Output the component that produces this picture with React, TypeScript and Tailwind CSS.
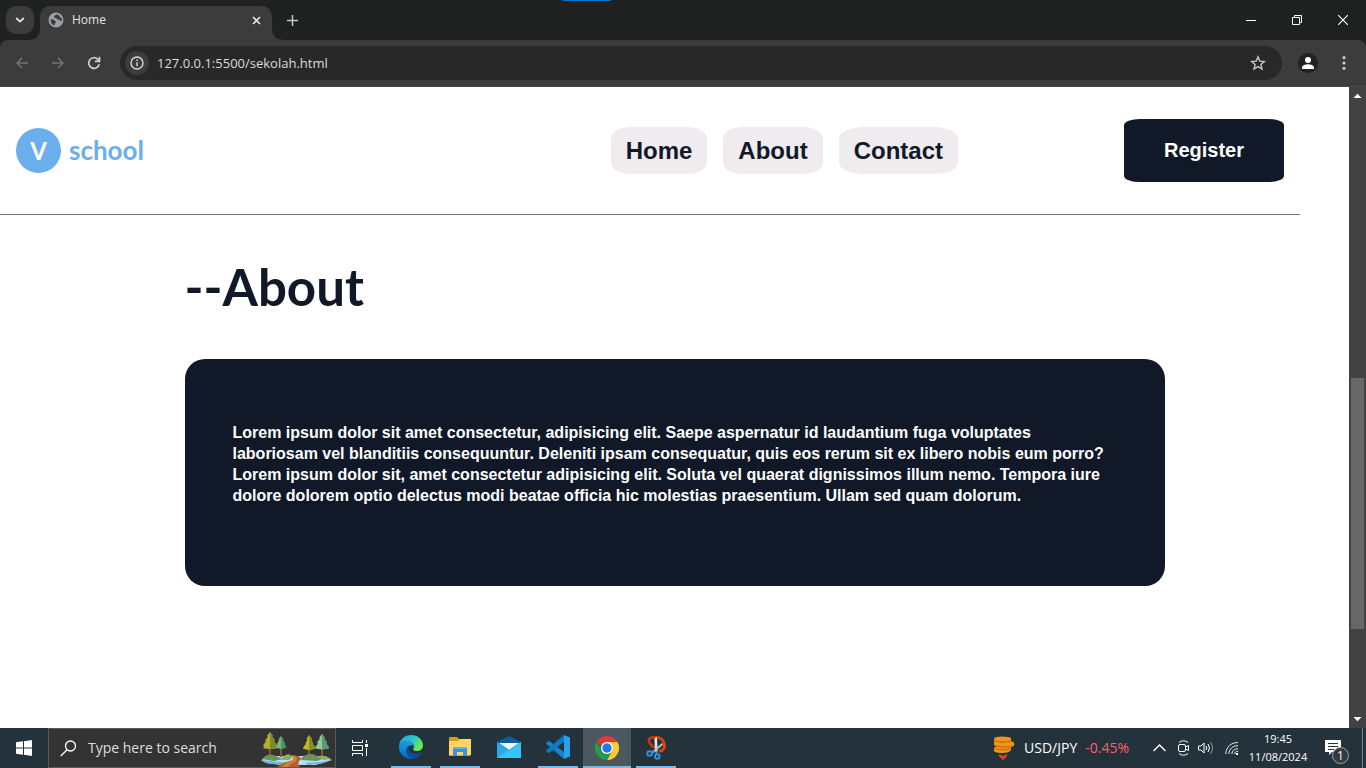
import React from 'react';

function WindowBar() {
  return (
    <div className="relative flex h-10 items-stretch bg-[#202221] font-['Open_Sans','Noto_Sans',sans-serif]">
      <span className="absolute left-[563px] top-0 h-px w-12 bg-[#0078d7]" />
      <button aria-label="Search tabs" className="mt-1.5 ml-1.5 flex h-7 w-7 items-center justify-center rounded-[10px] bg-[#3c3c3c]">
        <svg width="10" height="6" viewBox="0 0 10 6" fill="none" stroke="#e3e3e3" strokeWidth="1.8"><path d="M1.2 1l3.8 3.6L8.8 1" /></svg>
      </button>
      <div className="relative mt-1.5 ml-1.5 flex w-[232px] items-center rounded-t-[10px] bg-[#3c3c3c] pr-2.5 pb-1.5 pl-2">
        <svg className="absolute bottom-0 -left-2.5" width="10" height="10"><path d="M10 0v10H0A10 10 0 0010 0z" fill="#3c3c3c" /></svg>
        <svg className="absolute -right-2.5 bottom-0" width="10" height="10"><path d="M0 0v10h10A10 10 0 010 0z" fill="#3c3c3c" /></svg>
        <svg width="16" height="16" viewBox="0 0 16 16">
          <circle cx="8" cy="8" r="7" fill="#9aa0a6" />
          <path d="M8.7 2.2L6.2 4v2h2.2l.8 1.5h1.6l1 1.3 2.1.3v-3l-2.1-.9V3.7z M2.2 7.6h3.6l2 2.1v1.6H6.7v2.4L3.6 12z" fill="#3c3c3c" />
          <circle cx="8" cy="8" r="6.7" fill="none" stroke="#9aa0a6" strokeWidth="1.5" />
        </svg>
        <span className="ml-2 flex-1 text-xs text-[#e3e3e3]">Home</span>
        <button aria-label="Close tab" className="flex h-4 w-3 items-center justify-center">
          <svg width="9" height="9" viewBox="0 0 9 9" stroke="#e3e3e3" strokeWidth="1.6"><path d="M1 1l7 7M8 1L1 8" /></svg>
        </button>
      </div>
      <button aria-label="New tab" className="ml-[15px] flex w-3 items-center">
        <svg width="11" height="11" viewBox="0 0 11 11" stroke="#c7c7c7" strokeWidth="1.5"><path d="M5.5 0v11M0 5.5h11" /></svg>
      </button>
      <div className="ml-auto flex">
        <button aria-label="Minimize" className="flex w-[46px] items-center justify-center">
          <svg width="10" height="10" stroke="#fff"><path d="M0 5.500h10" /></svg>
        </button>
        <button aria-label="Restore" className="flex w-[46px] items-center justify-center">
          <svg width="10" height="10" fill="none" stroke="#fff"><path d="M.5 2.500h7v7h-7zM2.500 2.500v-2h7v7h-2" /></svg>
        </button>
        <button aria-label="Close" className="flex w-[46px] items-center justify-center">
          <svg width="10" height="10" stroke="#fff" strokeWidth="1.1"><path d="M0 0l10 10M10 0L0 10" /></svg>
        </button>
      </div>
    </div>
  );
}

function Toolbar() {
  return (
    <div className="bg-[#202221] font-['Open_Sans','Noto_Sans',sans-serif]">
      <div className="flex h-[47px] items-center rounded-t-lg border-b border-[#474747] bg-[#3c3c3c] pr-3.5 pl-3.5">
        <button aria-label="Back" className="flex w-4 justify-center">
          <svg width="12" height="12" viewBox="0 0 13 12" fill="none" stroke="#777" strokeWidth="1.5"><path d="M13 6H1.500M6.500 .7L1.200 6l5.300 5.300" /></svg>
        </button>
        <button aria-label="Forward" className="ml-5 flex w-4 justify-center">
          <svg width="12" height="12" viewBox="0 0 13 12" fill="none" stroke="#777" strokeWidth="1.5"><path d="M0 6h11.500M6.500 .7L11.800 6l-5.300 5.300" /></svg>
        </button>
        <button aria-label="Reload" className="ml-5 flex w-4 justify-center">
          <svg width="14" height="14" viewBox="0 0 14 14" fill="none" stroke="#d0d0d0" strokeWidth="1.7"><path d="M12.200 8.200A5.300 5.300 0 1 1 10.800 3.300L12 4.500M12.500 .8v4.500H8" /></svg>
        </button>
        <div className="ml-[18px] flex h-[34px] flex-1 items-center rounded-full bg-[#282828] pr-4 pl-[5px]">
          <button aria-label="View site information" className="flex h-6 w-6 items-center justify-center rounded-full bg-[#3c3c3c]">
            <svg width="14" height="14" viewBox="0 0 14 14" fill="none" stroke="#d8d8d8" strokeWidth="1.4"><circle cx="7" cy="7" r="6" /><path d="M7 6.200v4M7 3.600v1.500" /></svg>
          </button>
          <input aria-label="Address" defaultValue="127.0.0.1:5500/sekolah.html" className="ml-2 h-6 flex-1 bg-transparent text-[13px] text-[#dcdcdc] outline-none" />
          <button aria-label="Bookmark this page">
            <svg width="16" height="16" viewBox="0 0 16 16" fill="none" stroke="#c7c7c7" strokeWidth="1.4"><path d="M8 1.800l1.800 4.300 4.600.4-3.500 3 1.100 4.500L8 11.600 4 14l1.100-4.500-3.500-3 4.600-.4z" /></svg>
          </button>
        </div>
        <button aria-label="Profile" className="ml-4 flex h-5 w-5 items-center justify-center rounded-full bg-[#202221]">
          <svg width="14" height="14" viewBox="0 0 14 14" fill="#fff"><circle cx="7" cy="4" r="3" /><path d="M1 13v-1.500C1 9.500 4.500 8.300 7 8.300s6 1.200 6 3.200V13z" /></svg>
        </button>
        <button aria-label="Menu" className="ml-[18px] flex w-4 justify-center">
          <svg width="4" height="14" viewBox="0 0 4 14" fill="#c7c7c7"><circle cx="2" cy="1.700" r="1.600" /><circle cx="2" cy="7" r="1.600" /><circle cx="2" cy="12.300" r="1.600" /></svg>
        </button>
      </div>
    </div>
  );
}

function Site() {
  const navLink = 'rounded-[20%/25%] bg-[#efebee] px-[15px] py-[7px] text-2xl leading-[33px] font-bold';
  return (
    <div className="min-w-0 flex-1 bg-white font-['Liberation_Sans',sans-serif] text-[#111827]">
      <header className="mr-[49px] flex h-32 items-center border-b border-[#6b7880] px-4">
        <a href="#home" className="flex items-center gap-2 font-['Lato',sans-serif] font-bold text-[#6baeec]">
          <span className="flex h-[45px] w-[45px] items-center justify-center rounded-full bg-[#6baeec] text-2xl text-white">V</span>
          <span className="pb-0.5 text-[26px] leading-8">school</span>
        </a>
        <nav className="ml-auto flex gap-4">
          <a href="#home" className={navLink}>Home</a>
          <a href="#about" className={navLink}>About</a>
          <a href="#contact" className={navLink}>Contact</a>
        </nav>
        <button className="ml-[166px] h-[63px] w-40 rounded-[10%] bg-[#111827] pb-0.5 text-xl font-bold text-white">Register</button>
      </header>
      <main className="mx-auto max-w-[980px] pt-11">
        <h1 className="font-['Lato',sans-serif] text-[51px] leading-[56px] font-bold">--About</h1>
        <section className="mt-11 rounded-[20px] bg-[#111827] px-12 pt-[63px] pb-20">
          <p className="text-base leading-[21px] font-bold text-white">
            Lorem ipsum dolor sit amet consectetur, adipisicing elit. Saepe aspernatur id laudantium fuga voluptates laboriosam vel blanditiis consequuntur. Deleniti ipsam consequatur, quis eos rerum sit ex libero nobis eum porro? Lorem ipsum dolor sit, amet consectetur adipisicing elit. Soluta vel quaerat dignissimos illum nemo. Tempora iure dolore dolorem optio delectus modi beatae officia hic molestias praesentium. Ullam sed quam dolorum.
          </p>
        </section>
      </main>
    </div>
  );
}

function Scrollbar() {
  return (
    <div className="flex w-[17px] flex-col items-center bg-[#424242]">
      <svg className="my-1.5 shrink-0" width="9" height="5" fill="#fff"><path d="M0.500 5L4.500 .8 8.500 5z" /></svg>
      <div className="grow-[274]" />
      <div className="w-[13px] grow-[251] bg-[#686868]" />
      <div className="grow-[82]" />
      <svg className="my-1.5 shrink-0" width="9" height="5" fill="#fff"><path d="M.5 0l4 4.200 4-4.200z" /></svg>
    </div>
  );
}

function Forest() {
  return (
    <svg width="72" height="36" viewBox="0 0 72 36">
      <path d="M0 28l10-4h50l11 4-9 3-8 2H20L5 31z" fill="#b9def5" />
      <path d="M0 28l18 2 10 1-8 2-15-2z M71 28l-13 2-14 1 3 2 15-2z" fill="#6fb3de" />
      <path d="M8 15h2v12H8z M19 16h2v9h-2z M47 15h2v10h-2z M60 15h2v11h-2z" fill="#8a5138" />
      <path d="M9 0l3 4-1 .5 3 4-1 .8 3 4-1 1 1 2-7 1-7-1 1-2-1-1 3-4-1-.8 3-4-1-.5z" fill="#b5ae2a" />
      <path d="M9 0l3 4-1 .5 3 4-1 .8 3 4-1 1 1 2-7 1z" fill="#7f8b2a" />
      <path d="M48 3l3 4-1 .5 2 3.500-.5.8 3 4-1 1.200-5.500 1-5.500-1-.5-1.200 3-4-.5-.8 2-3.500-1-.5z" fill="#c4b824" />
      <path d="M48 3l3 4-1 .5 2 3.500-.5.8 3 4-1 1.200-5.500 1z" fill="#85902a" />
      <path d="M20 4l2.500 3.500-.8.500 2.300 3.500-.7.500 2.200 3.500-5.500 1.500-5.500-1.500 2.200-3.500-.7-.5 2.300-3.500-.8-.5z" fill="#77b785" />
      <path d="M20 4l2.500 3.500-.8.500 2.300 3.500-.7.500 2.200 3.500-5.500 1.500z" fill="#4a9464" />
      <path d="M61 2l3 4-.8.600 3 4-1 .8 2.800 4-.5 1.200-6.500 1-6.500-1-.5-1.200 3-4-1-.8 3-4-1-.6z" fill="#8ecb97" />
      <path d="M61 2l3 4-.8.600 3 4-1 .8 2.800 4-.5 1.200-6.500 1z" fill="#559c70" />
      <path d="M1 27q7-8 16-2l5 2-9 2z M39 27q9-8 17-3l8 2-8 3-15-1z" fill="#679554" />
      <path d="M21 26q6-7 11-1l-4 3h-7z M56 25q7-4 14 2l-7 1z" fill="#8baf59" />
      <path d="M31 23q11 1 8 5-4 3 1 8H16q3-5 13-7 6-2 2-6z" fill="#b65d2d" />
      <path d="M31 23q8 2 3 7-7 3-7 6h-7q3-5 10-7 5-3 1-6z" fill="#d0803f" />
    </svg>
  );
}

function EdgeIcon() {
  return (
    <svg width="24" height="24" viewBox="0 0 24 24">
      <defs>
        <linearGradient id="edgeTop" x1="0" y1="0" x2="1" y2=".45"><stop offset="0" stopColor="#219bd8" /><stop offset=".55" stopColor="#2bc3d2" /><stop offset="1" stopColor="#6bea4c" /></linearGradient>
        <linearGradient id="edgeSide" x1="0" y1="0" x2="0" y2="1"><stop offset="0" stopColor="#1ba0e3" /><stop offset="1" stopColor="#0868bf" /></linearGradient>
      </defs>
      <path d="M0 12C0 4.500 5.500 0 12 0c7 0 12 5 12 10.500 0 3.500-2.700 5.500-5.700 5.500-3 0-4.300-1-4.300-1.800 0-.7 1-1 1-2.800C15 8.500 12 6 8 6 3.500 6 0 9 0 12z" fill="url(#edgeTop)" />
      <path d="M0 12c0-3 3.500-6 8-6 4 0 7 2.500 7 5.400-1-2-5-1.400-6.300 1.200C6.500 17 10 22 16 23.300 8 26 0 20 0 12z" fill="url(#edgeSide)" />
      <path d="M9.500 10.800C5 14 7 21.500 13 24c4.500-.2 7.600-2.700 9.500-6 .3-.6-.1-.8-.6-.5-5.900 3-13.400-.1-12.400-6.700z" fill="#124b98" />
    </svg>
  );
}

function ChromeIcon() {
  return (
    <svg width="24" height="24" viewBox="0 0 24 24">
      <path d="M12 12L1.600 6A12 12 0 0 1 22.400 6z" fill="#e33b2e" />
      <path d="M12 12h0V6h10.400A12 12 0 0 1 12 24l5.200-9z" fill="#fcc934" />
      <path d="M12 12l5.200 3L12 24A12 12 0 0 1 1.600 6l5.200 9z" fill="#259b4b" />
      <circle cx="12" cy="12" r="6" fill="#fff" /><circle cx="12" cy="12" r="4.700" fill="#2675e7" />
    </svg>
  );
}

function SnippingIcon() {
  return (
    <svg width="20" height="24" viewBox="0 0 20 24" fill="none">
      <path d="M10 1.500C5 .8 2 2.500 3 5.500s3.500 5 6 6" stroke="#c9360c" strokeWidth="2.600" />
      <path d="M9 1.600c5-.6 8.500 2.400 9.300 6.400.7 4-1.300 7.500-5.300 7" stroke="#d9420f" strokeWidth="3" />
      <path d="M8.500 2.500L11 1l.5 15H9z" fill="#e9ecee" />
      <path d="M16 7l1 1.800L7 17.200 5.500 16z" fill="#b9bec2" />
      <circle cx="3.600" cy="17.500" r="2.300" stroke="#2b92dc" strokeWidth="2" />
      <circle cx="11.300" cy="20.500" r="2.300" stroke="#2b92dc" strokeWidth="2" />
      <path d="M5.700 16.800l3.300-1.300M10.600 15v3.500" stroke="#2b92dc" strokeWidth="1.800" />
    </svg>
  );
}

const apps = [
  { name: 'Microsoft Edge', icon: <EdgeIcon />, open: true },
  {
    name: 'File Explorer', open: true, icon: (
      <svg width="22" height="20" viewBox="0 0 22 20"><path d="M0 1q0-1 1-1h7l2 2h11v17H0z" fill="#dc9b16" /><path d="M0 4h9l2-2h11v16H0z" fill="#ffd767" /><path d="M4 10h14v9h-4v-4H8v4H4z" fill="#3695dd" /><path d="M4 10h14v2H4z" fill="#62b2e8" /></svg>
    ),
  },
  {
    name: 'Mail', open: false, icon: (
      <svg width="24" height="24" viewBox="0 0 24 24"><path d="M0 7l12-6 12 6v7H0z" fill="#095da8" /><path d="M2 8h20l-10 7z" fill="#f5f5f5" /><path d="M0 7l12 8L24 7v16H0z" fill="#28a8ea" /><path d="M0 23l24-16v16z" fill="#36c5f4" /></svg>
    ),
  },
  {
    name: 'Visual Studio Code', open: true, icon: (
      <svg width="24" height="24" viewBox="0 0 24 24"><path d="M18 24L.5 9q-.8-.8 0-1.500l1.600-1.300q.7-.5 1.400 0L18 17z" fill="#1684ce" /><path d="M18 0L.5 15q-.8.8 0 1.500l1.600 1.300q.7.5 1.400 0L18 7z" fill="#087bc4" /><path d="M18 0l6 2.500v19L18 24z" fill="#2d9fea" /></svg>
    ),
  },
];

function Taskbar() {
  return (
    <footer className="flex h-10 items-stretch bg-[#24323c] font-['Open_Sans','Noto_Sans',sans-serif] text-white">
      <button aria-label="Start" className="flex w-12 items-center justify-center">
        <svg width="16" height="16" viewBox="0 0 16 16" fill="#fff"><path d="M0 2.300l7-1v6.200H0zM8 1.200L16 0v7.500H8zM0 8.500h7v6.200l-7-1zM8 8.500h8V16l-8-1.200z" /></svg>
      </button>
      <label className="flex w-72 items-center overflow-hidden border border-[#5a5a5a] bg-[#333] pl-[11px]">
        <svg width="17" height="17" viewBox="0 0 17 17" fill="none" stroke="#fff" strokeWidth="1.300"><circle cx="10.500" cy="6" r="5" /><path d="M7 9.800L.8 16" /></svg>
        <input aria-label="Search" placeholder="Type here to search" className="ml-[11px] w-[173px] bg-transparent text-sm outline-none placeholder:text-[#dedede]" />
        <span className="mt-1"><Forest /></span>
      </label>
      <button aria-label="Task view" className="flex w-12 items-center justify-center">
        <svg width="16" height="16" viewBox="0 0 16 16" fill="none" stroke="#fff"><path d="M.5 0v2.500h10V0M.5 16v-2.500h10V16M.5 5.500h10v5H.5zM14.500 0v3M14.500 8v8" /><path d="M13 4h3v3h-3z" fill="#fff" stroke="none" /></svg>
      </button>
      <div className="flex">
        {apps.map((app) => (
          <button key={app.name} aria-label={app.name} className="flex w-[49px] flex-col items-center pl-1">
            <span className="flex h-[38px] items-center">{app.icon}</span>
            {app.open && <span className="h-0.5 w-10 bg-[#76b9ed]" />}
          </button>
        ))}
        <button aria-label="Google Chrome" className="ml-[3px] flex w-12 flex-col items-center bg-[#4c585f]">
          <span className="flex h-[38px] items-center pt-0.5"><ChromeIcon /></span>
          <span className="h-0.5 w-full bg-[#76b9ed]" />
        </button>
        <button aria-label="Snipping Tool" className="flex w-[49px] flex-col items-center">
          <span className="flex h-[38px] items-center pt-0.5"><SnippingIcon /></span>
          <span className="h-0.5 w-10 bg-[#76b9ed]" />
        </button>
      </div>
      <div className="ml-auto flex items-center">
        <button className="flex items-center text-sm">
          <svg width="24" height="24" viewBox="0 0 24 24"><path d="M2 2.500Q3 .5 10 .5t9 1.500v3l3 1.500q1 2-1 4l-2 .8v3.200q-3 2.500-9 2.500T2 15v-3l2-1.500-2-1.500z" fill="#f29418" /><path d="M2 4.500q7 3 17 .5M3 9.500q9 3 18 .5M3 12.500q8 2.500 16 0" stroke="#c4650d" fill="none" strokeWidth="1.200" /><path d="M7 18l4 2 4-2v2.500L11 24l-4-3.500z" fill="#d9471d" /></svg>
          <span className="ml-2">USD/JPY</span>
          <span className="ml-2 text-[#ff6065]">-0.45%</span>
        </button>
        <button aria-label="Show hidden icons" className="ml-6"><svg width="13" height="8" fill="none" stroke="#fff" strokeWidth="1.400"><path d="M.5 7l6-6 6 6" /></svg></button>
        <button aria-label="Meet Now" className="ml-[11px]">
          <svg width="13" height="16" viewBox="0 0 13 16" fill="none" stroke="#fff"><rect x="1.500" y="4.500" width="7" height="7" rx="1.500" /><path d="M8.500 7l3-1.500v5L8.500 9M2 2.500q4.500-3.500 9 0M2 13.500q4.500 3.500 9 0" /></svg>
        </button>
        <button aria-label="Volume" className="ml-2">
          <svg width="16" height="14" viewBox="0 0 16 14" fill="none" stroke="#fff"><path d="M.5 5v4h2.500l3 3V2L3 5zM8 5q1.500 2 0 4M10 3q3 4 0 8" /><path d="M12.500 1q4 6 0 12" stroke="#89949a" /></svg>
        </button>
        <button aria-label="Network" className="ml-[11px]">
          <svg width="14" height="14" viewBox="0 0 14 14" fill="none" stroke="#e9edef"><path d="M.8 13C1 6 6 1.500 13 1.500M3.800 13c.2-5 4-8.300 9.200-8.300M6.800 13c.2-3 2.700-5.300 6.200-5.300M9.500 13c.2-1.600 1.600-2.700 3.500-2.700" /><path d="M11 12h2v2h-2z" fill="#fff" stroke="none" /></svg>
        </button>
        <div className="ml-2 w-[62px] text-center text-[11px] leading-[18px]">
          <div>19:45</div>
          <div>11/08/2024</div>
        </div>
        <button aria-label="Notifications, 1 new" className="relative ml-4 h-4 w-6">
          <svg className="absolute top-0 left-0" width="16" height="16" viewBox="0 0 16 16"><path d="M0 0h16v12H7l-3 3v-3H0z" fill="#fff" /><path d="M3 3.500h10M3 6.500h10M3 9.500h6" stroke="#24323c" /></svg>
          <span className="absolute top-[7px] left-[7px] flex h-[17px] w-[17px] items-center justify-center rounded-full border border-[#a3a8ac] bg-[#333a40] text-xs">1</span>
        </button>
        <span className="ml-[13px] h-10 w-1 border-l border-[#77838a]" />
      </div>
    </footer>
  );
}

export default function App() {
  return (
    <div className="flex min-h-screen flex-col bg-white">
      <WindowBar />
      <Toolbar />
      <div className="flex flex-1">
        <Site />
        <Scrollbar />
      </div>
      <Taskbar />
    </div>
  );
}
